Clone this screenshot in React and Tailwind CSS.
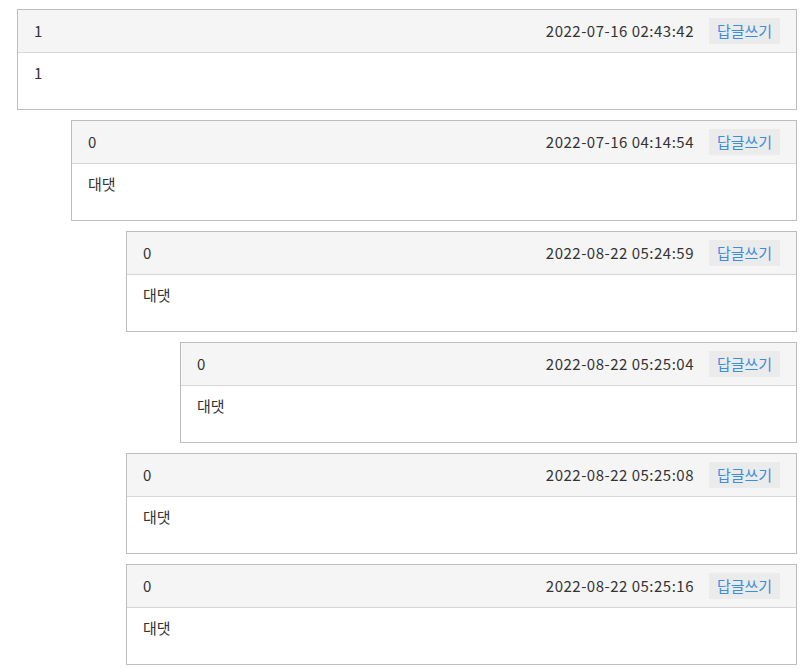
const comments = [
  { id: 1, likes: "1", date: "2022-07-16 02:43:42", body: "1", indent: "ml-0" },
  { id: 2, likes: "0", date: "2022-07-16 04:14:54", body: "대댓", indent: "ml-[54px]" },
  { id: 3, likes: "0", date: "2022-08-22 05:24:59", body: "대댓", indent: "ml-[109px]" },
  { id: 4, likes: "0", date: "2022-08-22 05:25:04", body: "대댓", indent: "ml-[163px]" },
  { id: 5, likes: "0", date: "2022-08-22 05:25:08", body: "대댓", indent: "ml-[109px]" },
  { id: 6, likes: "0", date: "2022-08-22 05:25:16", body: "대댓", indent: "ml-[109px]" },
];

function Comment({ likes, date, body, indent }) {
  return (
    <div className={`${indent} border border-[#bdbdbd] bg-white`}>
      <div className="flex h-[43px] items-center justify-between border-b border-[#d6d6d6] bg-[#f5f5f5] pl-4 pr-4">
        <span className="text-[#333]">{likes}</span>
        <div className="flex items-center gap-[15px]">
          <span className="tracking-[0.5px] text-[#333]">{date}</span>
          <button className="h-[26px] w-[71px] bg-[#ebebeb] text-[#3b8de0]">답글쓰기</button>
        </div>
      </div>
      <div className="h-[56px] px-4 pt-[10px] text-[#333]">{body}</div>
    </div>
  );
}

export default function App() {
  return (
    <div
      className="flex flex-col gap-[10px] pl-[17px] pr-[9px] pt-[9px] text-[15px] leading-[20px]"
      style={{ fontFamily: '"Noto Sans CJK KR", "Noto Sans", sans-serif' }}
    >
      {comments.map((c) => (
        <Comment key={c.id} {...c} />
      ))}
    </div>
  );
}
